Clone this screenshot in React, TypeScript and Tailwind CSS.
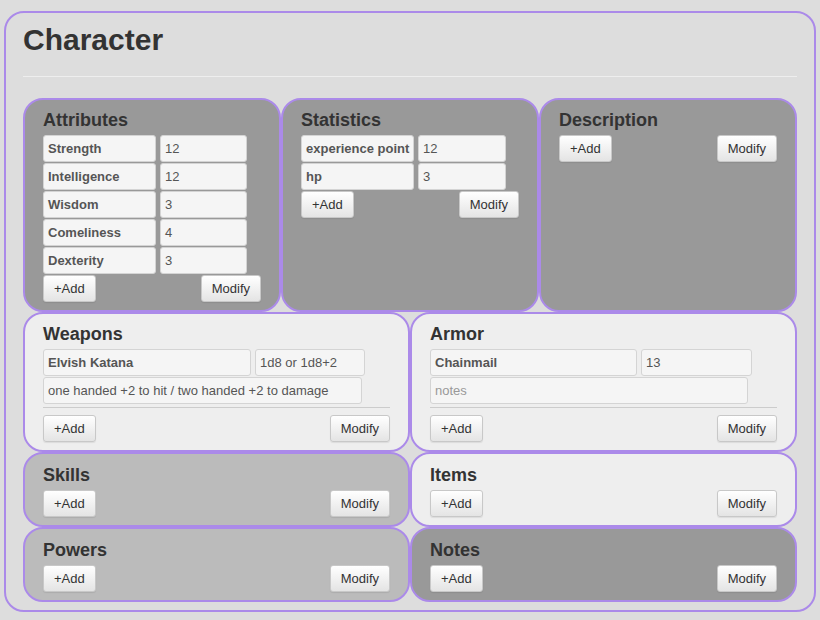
import React from "react";

const purple = "border-[#ab8ae9]";

function Field({ text, w, bold, placeholder }: { text: string; w: string; bold?: boolean; placeholder?: boolean }) {
  return (
    <div
      className={`${w} h-[27px] flex items-center px-[4px] bg-[#f5f5f5] border border-[#d4d4d4] rounded-[3px] overflow-hidden whitespace-nowrap text-[13px] ${
        bold ? "font-bold text-[#555]" : placeholder ? "text-[#999]" : "text-[#555]"
      }`}
    >
      {text}
    </div>
  );
}

function Btn({ children }: { children: React.ReactNode }) {
  return (
    <div className="h-[27px] px-[10px] flex items-center border border-[#c8c8c8] rounded-[3px] bg-linear-to-b from-white to-[#e4e4e4] text-[13px] text-[#333] shadow-[0_1px_1px_rgba(0,0,0,0.08)]">
      {children}
    </div>
  );
}

function Panel({ title, bg, children, compact }: { title: string; bg: string; children?: React.ReactNode; compact?: boolean }) {
  return (
    <div className={`${bg} border-2 ${purple} rounded-[20px] pt-[9px] pb-[8px] px-[18px]`}>
      <div className={`text-[18px] font-bold leading-[23px] h-[23px] text-[#333] ${compact ? "mt-[1px] mb-[3px]" : "mb-[3px]"}`}>{title}</div>
      {children}
      <div className="flex justify-between">
        <Btn>+Add</Btn>
        <Btn>Modify</Btn>
      </div>
    </div>
  );
}

function PairRows({ rows, lw, vw }: { rows: [string, string][]; lw: string; vw: string }) {
  return (
    <div>
      {rows.map(([a, b]) => (
        <div key={a} className="flex gap-[4px] mb-[1px]">
          <Field text={a} w={lw} bold />
          <Field text={b} w={vw} />
        </div>
      ))}
    </div>
  );
}

export default function App() {
  return (
    <div className="min-h-[620px] bg-[#dddddd] pt-[11px] overflow-hidden" style={{ fontFamily: '"Liberation Sans", Arial, Helvetica, sans-serif' }}>
      <div className={`ml-[4px] w-[812px] border-2 ${purple} rounded-[20px] pt-[10px] pb-[8px] pl-[17px] pr-[17px] bg-[#dddddd]`}>
        <div className="text-[30px] font-bold leading-[33px] text-[#333]">Character</div>
        <div className="mt-[20px] mb-[21px] border-t border-[#eeeeee]" />
        <div className="grid grid-cols-3">
          <Panel title="Attributes" bg="bg-[#999999]">
            <PairRows
              lw="w-[113px]"
              vw="w-[87px]"
              rows={[
                ["Strength", "12"],
                ["Intelligence", "12"],
                ["Wisdom", "3"],
                ["Comeliness", "4"],
                ["Dexterity", "3"],
              ]}
            />
          </Panel>
          <Panel title="Statistics" bg="bg-[#999999]">
            <PairRows
              lw="w-[113px]"
              vw="w-[88px]"
              rows={[
                ["experience point", "12"],
                ["hp", "3"],
              ]}
            />
          </Panel>
          <Panel title="Description" bg="bg-[#999999]" />
        </div>
        <div className="grid grid-cols-2">
          <Panel title="Weapons" bg="bg-[#eeeeee]">
            <div className="flex gap-[4px] mb-[1px]">
              <Field text="Elvish Katana" w="w-[208px]" bold />
              <Field text="1d8 or 1d8+2" w="w-[110px]" />
            </div>
            <Field text="one handed +2 to hit / two handed +2 to damage" w="w-[319px]" />
            <div className="mt-[3px] mb-[7px] border-t border-[#cccccc]" />
          </Panel>
          <Panel title="Armor" bg="bg-[#eeeeee]">
            <div className="flex gap-[4px] mb-[1px]">
              <Field text="Chainmail" w="w-[207px]" bold />
              <Field text="13" w="w-[111px]" />
            </div>
            <Field text="notes" w="w-[318px]" placeholder />
            <div className="mt-[3px] mb-[7px] border-t border-[#cccccc]" />
          </Panel>
          <Panel title="Skills" bg="bg-[#bbbbbb]" compact />
          <Panel title="Items" bg="bg-[#eeeeee]" compact />
          <Panel title="Powers" bg="bg-[#bbbbbb]" compact />
          <Panel title="Notes" bg="bg-[#999999]" compact />
        </div>
      </div>
    </div>
  );
}
